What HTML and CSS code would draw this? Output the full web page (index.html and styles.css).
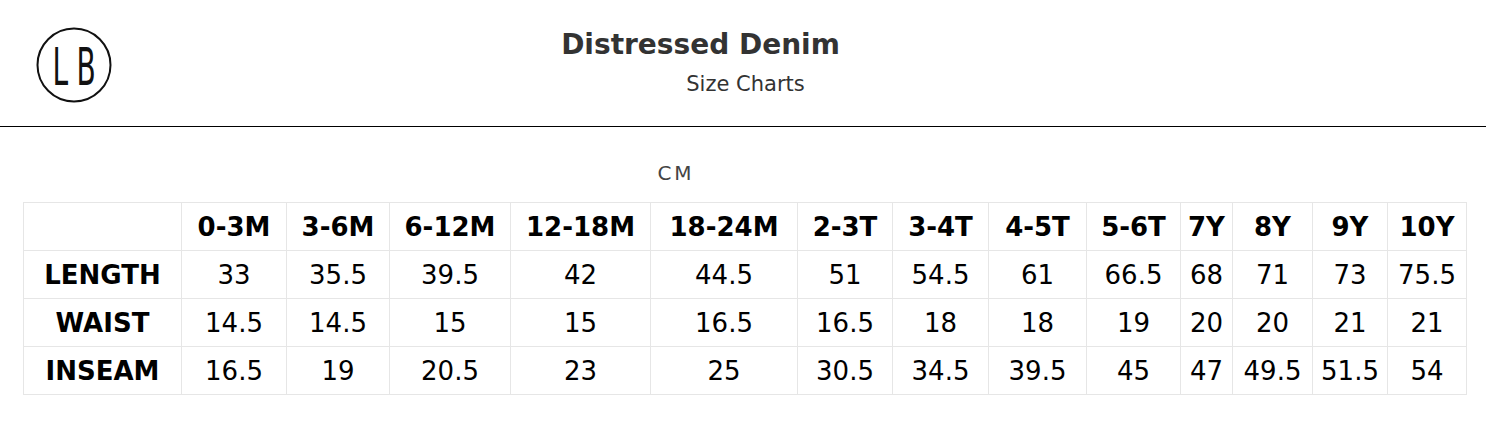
FILE: index.html
```html
<!DOCTYPE html>
<html lang="en">
<head>
<meta charset="utf-8">
<title>Distressed Denim - Size Charts</title>
<link rel="stylesheet" href="styles.css">
</head>
<body>
<header class="top">
  <svg class="logo" width="78" height="78" viewBox="0 0 78 78" aria-label="LB">
    <circle cx="39" cy="39" r="36.5" fill="none" stroke="#111" stroke-width="2"/>
    <text transform="translate(17.4 58.5) scale(0.55 1)" font-family="DejaVu Sans" font-size="51" fill="#111">L</text>
    <text transform="translate(41.6 58.5) scale(0.55 1)" font-family="DejaVu Sans" font-size="51" fill="#111">B</text>
  </svg>
  <div class="titles">
    <h1 class="title">Distressed Denim</h1>
    <p class="subtitle">Size Charts</p>
  </div>
</header>
<main class="chart">
  <p class="unit">CM</p>
  <table class="sizes">
    <colgroup>
      <col class="c0"><col class="c1"><col class="c2"><col class="c3"><col class="c4"><col class="c5"><col class="c6"><col class="c7"><col class="c8"><col class="c9"><col class="c10"><col class="c11"><col class="c12"><col class="c13">
    </colgroup>
    <tr class="head">
      <th></th><th>0-3M</th><th>3-6M</th><th>6-12M</th><th>12-18M</th><th>18-24M</th><th>2-3T</th><th>3-4T</th><th>4-5T</th><th>5-6T</th><th>7Y</th><th>8Y</th><th>9Y</th><th>10Y</th>
    </tr>
    <tr>
      <th>LENGTH</th><td>33</td><td>35.5</td><td>39.5</td><td>42</td><td>44.5</td><td>51</td><td>54.5</td><td>61</td><td>66.5</td><td>68</td><td>71</td><td>73</td><td>75.5</td>
    </tr>
    <tr>
      <th>WAIST</th><td>14.5</td><td>14.5</td><td>15</td><td>15</td><td>16.5</td><td>16.5</td><td>18</td><td>18</td><td>19</td><td>20</td><td>20</td><td>21</td><td>21</td>
    </tr>
    <tr>
      <th>INSEAM</th><td>16.5</td><td>19</td><td>20.5</td><td>23</td><td>25</td><td>30.5</td><td>34.5</td><td>39.5</td><td>45</td><td>47</td><td>49.5</td><td>51.5</td><td>54</td>
    </tr>
  </table>
</main>
</body>
</html>
```
FILE: styles.css
```css
html, body {
  margin: 0;
  padding: 0;
  background: #fff;
}
body {
  font-family: "DejaVu Sans", "Liberation Sans", sans-serif;
  color: #333;
}
.top {
  display: flex;
  align-items: flex-start;
  height: 100px;
  padding: 26px 0 0 35px;
  border-bottom: 1px solid #000;
}
.logo {
  display: block;
  flex: none;
}
.titles {
  flex: 1;
  padding-right: 198px;
  text-align: center;
}
.title {
  margin: 2px 0 0;
  font-size: 28px;
  line-height: 34px;
  font-weight: 700;
  color: #333;
}
.subtitle {
  margin: 10px 0 0;
  padding-left: 90px;
  font-size: 21px;
  line-height: 24px;
  color: #333;
}
.chart {
  padding: 0 20px 0 23px;
}
.unit {
  margin: 33px 0 0;
  padding-right: 137px;
  text-align: center;
  font-size: 20px;
  line-height: 26px;
  letter-spacing: 3px;
  color: #444;
}
.sizes {
  margin-top: 16px;
  width: 1444px;
  border-collapse: collapse;
  table-layout: fixed;
  font-family: "DejaVu Sans", sans-serif;
  color: #000;
}
.sizes th,
.sizes td {
  border: 1px solid #e6e6e6;
  height: 47px;
  padding: 0;
  text-align: center;
  font-size: 26px;
  line-height: 30px;
  white-space: nowrap;
}
.sizes th {
  font-weight: 700;
}
.sizes td {
  font-weight: 400;
}
.c0 { width: 158px; }
.c1 { width: 105px; }
.c2 { width: 103px; }
.c3 { width: 121px; }
.c4 { width: 140px; }
.c5 { width: 147px; }
.c6 { width: 95px; }
.c7 { width: 96px; }
.c8 { width: 98px; }
.c9 { width: 94px; }
.c10 { width: 52px; }
.c11 { width: 80px; }
.c12 { width: 75px; }
.c13 { width: 79px; }
```
